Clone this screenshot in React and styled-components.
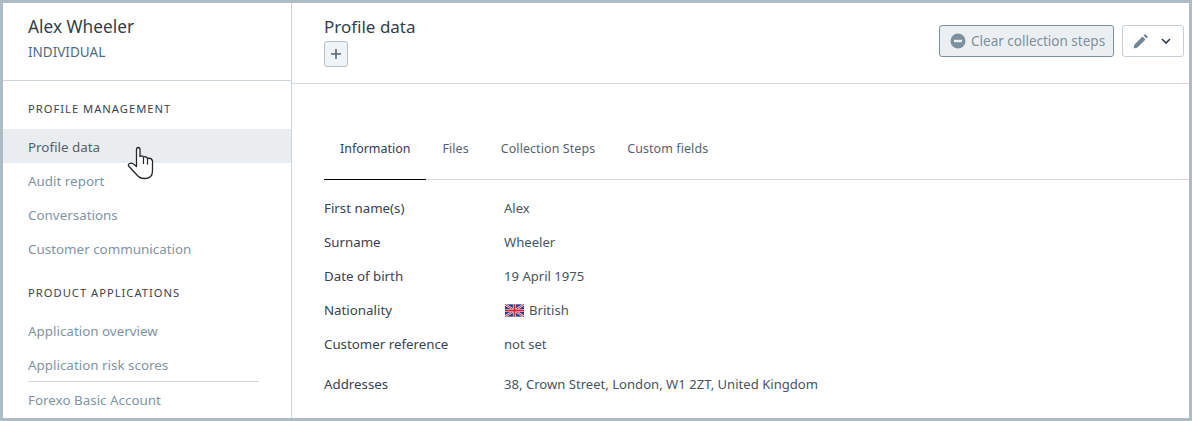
import React from 'react'
import styled, { createGlobalStyle } from 'styled-components'

const GlobalStyle = createGlobalStyle`
  html, body {
    margin: 0;
    padding: 0;
    background: #fff;
  }
  * {
    box-sizing: border-box;
  }
`

const profileLinks = ['Profile data', 'Audit report', 'Conversations', 'Customer communication']
const tabs = ['Information', 'Files', 'Collection Steps', 'Custom fields']

const Flag = () => (
  <FlagIcon width="19" height="13" viewBox="0 0 60 39">
    <rect width="60" height="39" fill="#23408f" />
    <path d="M0 0 L60 39 M60 0 L0 39" stroke="#f4dfe2" strokeWidth="7" />
    <path d="M0 0 L60 39 M60 0 L0 39" stroke="#d5283c" strokeWidth="3" />
    <path d="M30 0 V39 M0 19.5 H60" stroke="#f7e6e8" strokeWidth="10" />
    <path d="M30 0 V39 M0 19.5 H60" stroke="#d5283c" strokeWidth="6" />
  </FlagIcon>
)

const HandCursor = () => (
  <Cursor width="27" height="34" viewBox="0 0 27 34">
    <path
      d="M9.5 20.5 V4 Q9.5 1.5 11 1.5 Q13 1.5 13 4 V10.5 Q15.5 9 16.5 11 Q19.5 10 20.5 12.5 Q24.5 11.5 25.5 15 V25 Q25.5 32.5 17.5 32.5 Q12.5 32.5 9.5 28.5 L2 20.5 Q0.5 18.5 2.5 17.5 Q4.5 16.5 6.5 18 Z"
      fill="#fff"
      stroke="#23282d"
      strokeWidth="1.3"
      strokeLinejoin="round"
    />
    <path d="M16.5 11 V18 M20.5 12.5 V18.5" stroke="#23282d" strokeWidth="1.2" fill="none" />
  </Cursor>
)

const App = () => {
  return (
    <Frame>
      <GlobalStyle />
      <Sidebar>
        <SideHead>
          <Name>Alex Wheeler</Name>
          <Kind>INDIVIDUAL</Kind>
        </SideHead>
        <SectionTitle>PROFILE MANAGEMENT</SectionTitle>
        {profileLinks.map((link, i) => (
          <SideLink key={link} $active={i === 0}>
            {link}
            {i === 0 && <HandCursor />}
          </SideLink>
        ))}
        <SectionTitle>PRODUCT APPLICATIONS</SectionTitle>
        <SideLink>Application overview</SideLink>
        <SideLink>Application risk scores</SideLink>
        <SideDivider />
        <SideLink>Forexo Basic Account</SideLink>
      </Sidebar>
      <Main>
        <MainHead>
          <div>
            <PageTitle>Profile data</PageTitle>
            <PlusButton>
              <svg width="12" height="12" viewBox="0 0 12 12">
                <path d="M6 1 V11 M1 6 H11" stroke="#4f6b80" strokeWidth="1.6" />
              </svg>
            </PlusButton>
          </div>
          <Actions>
            <ClearButton>
              <svg width="16" height="16" viewBox="0 0 16 16">
                <circle cx="8" cy="8" r="7.5" fill="#7d909e" />
                <rect x="4" y="6.8" width="8" height="2.4" fill="#eceff2" />
              </svg>
              Clear collection steps
            </ClearButton>
            <EditButton>
              <svg width="15" height="15" viewBox="0 0 15 15">
                <path d="M0.5 14.5 L1.5 10.5 L9.5 2.5 L12.5 5.5 L4.5 13.5 Z M10.5 1.5 L11.5 0.5 Q12 0 12.5 0.5 L14.5 2.5 Q15 3 14.5 3.5 L13.5 4.5 Z" fill="#6f8494" />
              </svg>
              <svg width="10" height="7" viewBox="0 0 10 7">
                <path d="M1 1 L5 5 L9 1" stroke="#2f3d49" strokeWidth="1.6" fill="none" />
              </svg>
            </EditButton>
          </Actions>
        </MainHead>
        <Content>
          <TabBar>
            {tabs.map((tab, i) => (
              <Tab key={tab} $active={i === 0}>{tab}</Tab>
            ))}
          </TabBar>
          <Row>
            <Label>First name(s)</Label>
            <Value>Alex</Value>
          </Row>
          <Row>
            <Label>Surname</Label>
            <Value>Wheeler</Value>
          </Row>
          <Row>
            <Label>Date of birth</Label>
            <Value>19 April 1975</Value>
          </Row>
          <Row>
            <Label>Nationality</Label>
            <Value><Flag /> British</Value>
          </Row>
          <Row>
            <Label>Customer reference</Label>
            <Value>not set</Value>
          </Row>
          <Row $spaced>
            <Label>Addresses</Label>
            <Value>38, Crown Street, London, W1 2ZT, United Kingdom</Value>
          </Row>
        </Content>
      </Main>
    </Frame>
  )
}

export default App

const Frame = styled.div`
  width: 1192px;
  height: 421px;
  border: 3px solid #adbcc4;
  display: flex;
  overflow: hidden;
  background: #fff;
  font-family: "Noto Sans", sans-serif;
  font-size: 13px;
  color: #38434f;
`

const Sidebar = styled.div`
  width: 289px;
  flex-shrink: 0;
  border-right: 1px solid #cdd6dc;
`

const SideHead = styled.div`
  height: 78px;
  padding: 13px 25px 0;
  border-bottom: 1px solid #cdd6dc;
`

const Name = styled.div`
  font-size: 17.3px;
  line-height: 22px;
  color: #333e4a;
`

const Kind = styled.div`
  margin-top: 5px;
  font-size: 13.5px;
  line-height: 18px;
  color: #4f6b80;
`

const SectionTitle = styled.div`
  padding: 0 25px;
  margin-top: 20px;
  margin-bottom: 12px;
  font-size: 11.2px;
  line-height: 16px;
  letter-spacing: 1px;
  color: #38434f;
`

const SideLink = styled.div`
  position: relative;
  height: 34px;
  padding: 2px 25px 0;
  display: flex;
  align-items: center;
  font-size: 13.4px;
  color: ${props => (props.$active ? '#56626e' : '#7f94a4')};
  background: ${props => (props.$active ? '#e9edf0' : 'transparent')};
`

const Cursor = styled.svg`
  position: absolute;
  left: 124px;
  top: 17px;
`

const SideDivider = styled.div`
  height: 1px;
  margin: 0 32px 0 25px;
  background: #cdd6dc;
`

const Main = styled.div`
  flex: 1;
  min-width: 0;
`

const MainHead = styled.div`
  height: 81px;
  padding: 13px 5px 0 32px;
  border-bottom: 1px solid #d3d9dc;
  display: flex;
  justify-content: space-between;
`

const PageTitle = styled.div`
  font-size: 17px;
  line-height: 22px;
  color: #333e4a;
`

const PlusButton = styled.div`
  width: 24px;
  height: 26px;
  margin-top: 3px;
  border: 1px solid #b4c1ca;
  border-radius: 3px;
  background: #f1f4f6;
  display: flex;
  align-items: center;
  justify-content: center;
`

const Actions = styled.div`
  display: flex;
  gap: 8px;
  margin-top: 9px;
`

const ClearButton = styled.div`
  width: 175px;
  height: 32px;
  padding-left: 10px;
  display: flex;
  align-items: center;
  gap: 5px;
  font-size: 13.5px;
  border: 1px solid #7d909e;
  border-radius: 3px;
  background: #eceff2;
  color: #7d909e;
`

const EditButton = styled.div`
  width: 62px;
  height: 32px;
  padding: 0 12px 0 10px;
  display: flex;
  align-items: center;
  justify-content: space-between;
  border: 1px solid #c5ced4;
  border-radius: 3px;
`

const Content = styled.div`
  padding: 34px 0 0 32px;
`

const TabBar = styled.div`
  height: 62px;
  margin-bottom: 11px;
  display: flex;
  border-bottom: 1px solid #d3d9dc;
`

const Tab = styled.div`
  height: 62px;
  padding: 0 16px;
  display: flex;
  align-items: center;
  font-size: 12.45px;
  letter-spacing: ${props => (props.$active ? '0' : '0.1px')};
  color: ${props => (props.$active ? '#333e4a' : '#56626e')};
  border-bottom: 1px solid ${props => (props.$active ? '#000' : 'transparent')};
`

const Row = styled.div`
  height: 34px;
  margin-top: ${props => (props.$spaced ? '6px' : '0')};
  display: flex;
  align-items: center;
`

const Label = styled.div`
  width: 180px;
  flex-shrink: 0;
  font-size: 13.3px;
  color: #38434f;
`

const Value = styled.div`
  display: flex;
  align-items: center;
  gap: 5px;
  font-size: 13.1px;
  color: #48545f;
`

const FlagIcon = styled.svg`
  margin-left: 1px;
`
